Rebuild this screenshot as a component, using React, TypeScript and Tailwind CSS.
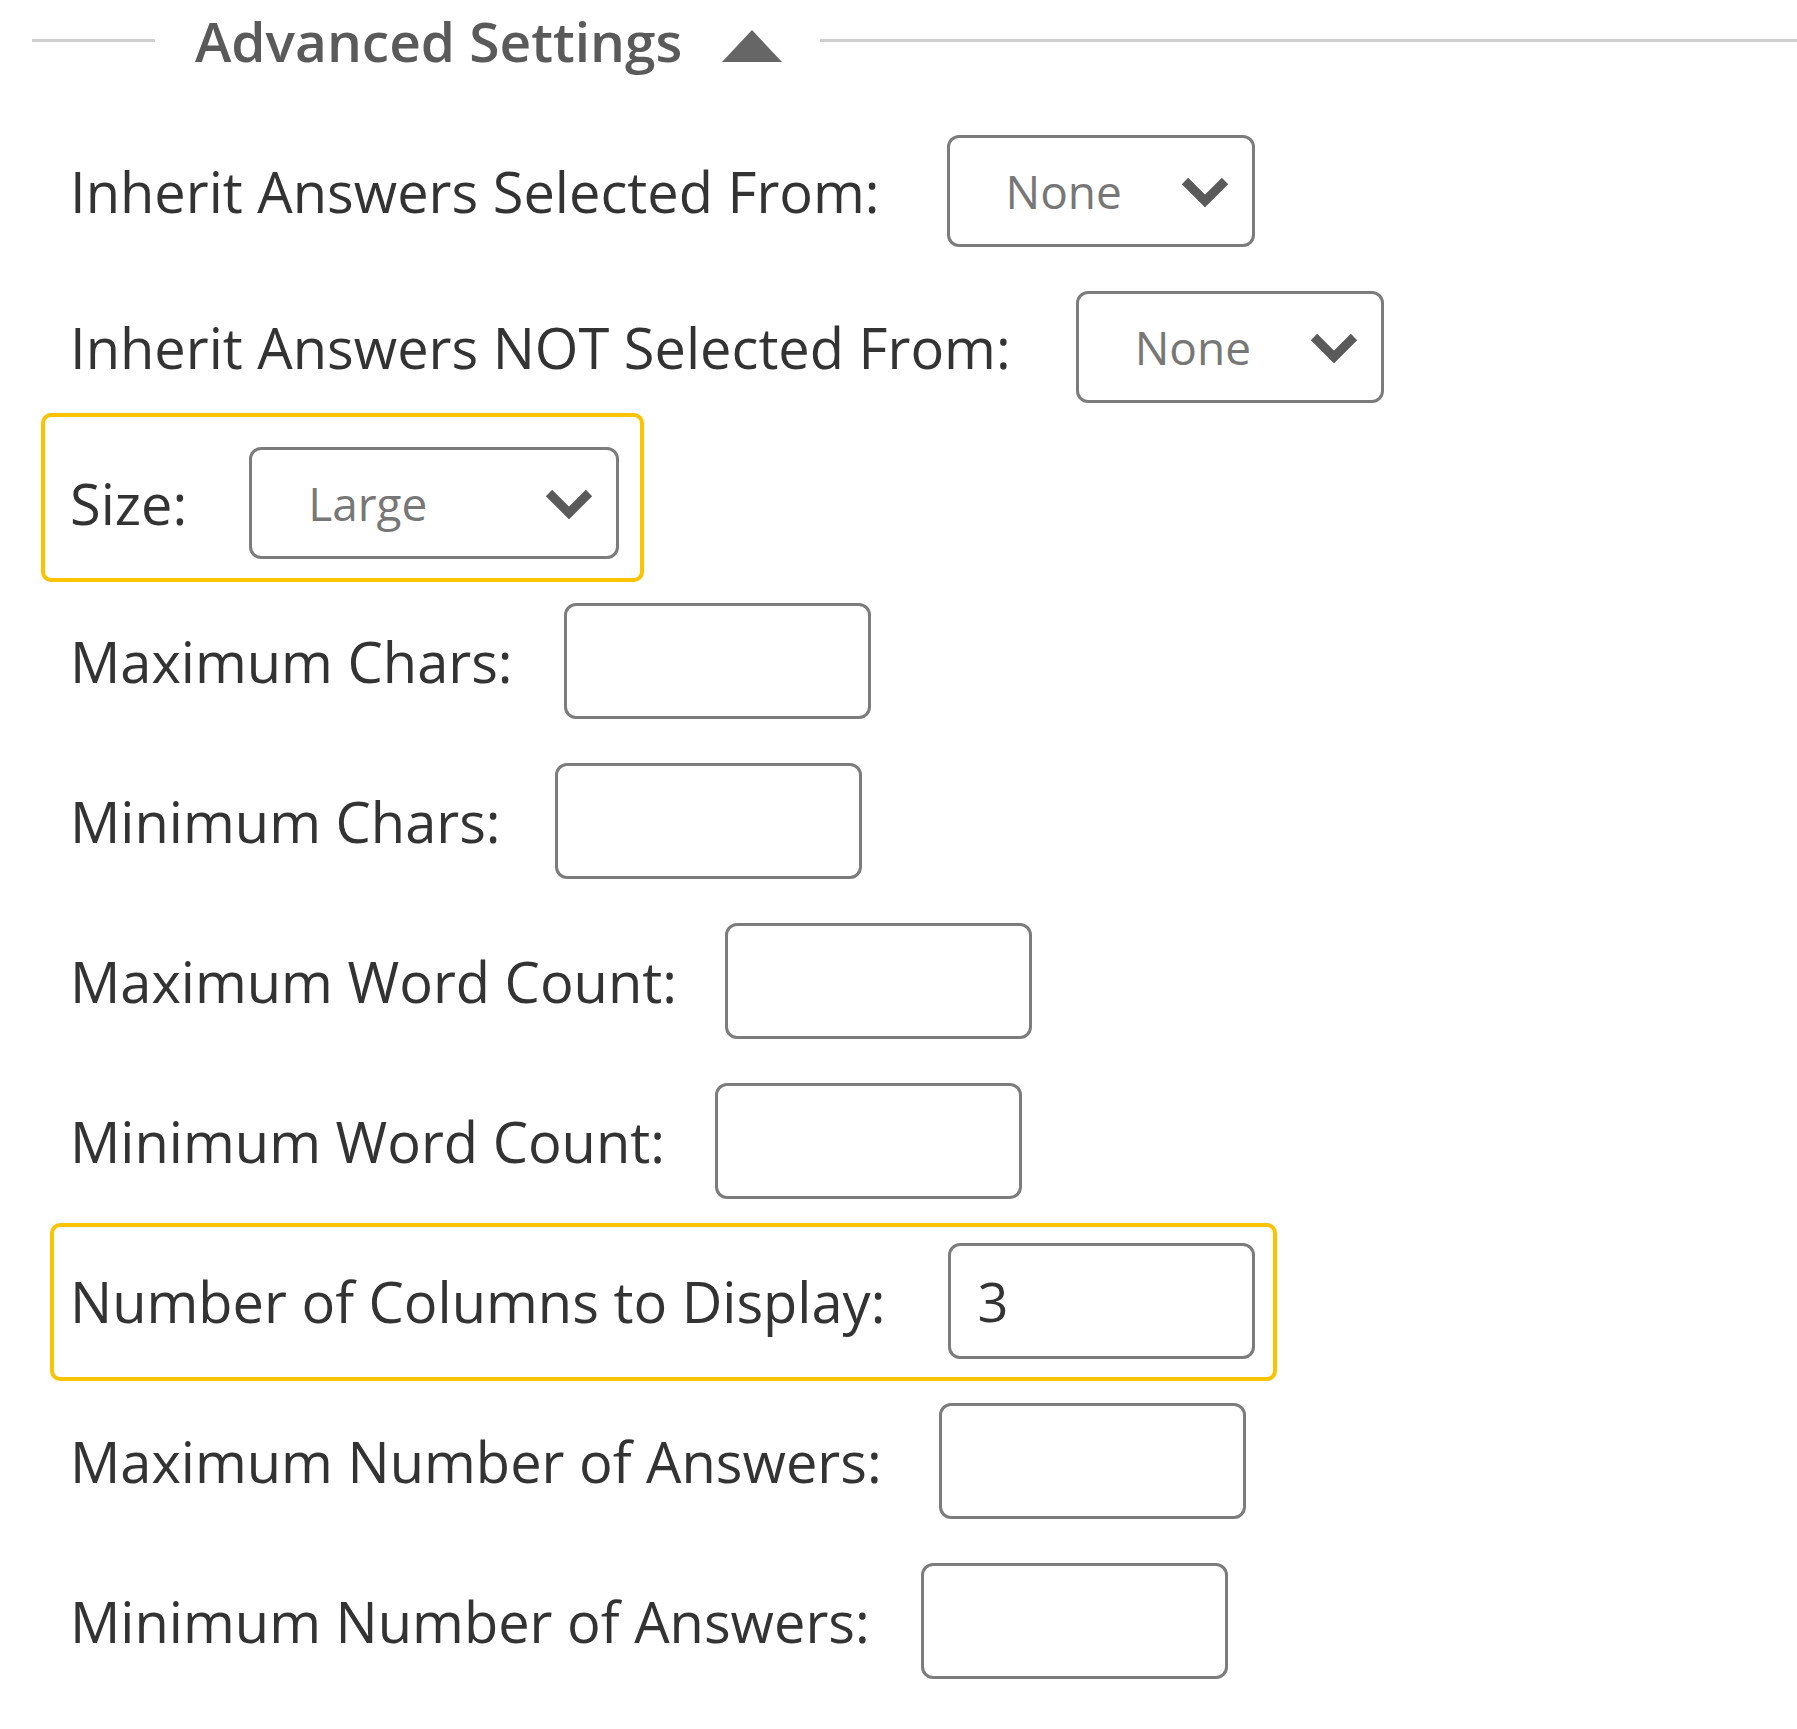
import React from "react";

const Chevron = () => (
  <svg width="50" height="32" viewBox="0 0 50 32" className="shrink-0">
    <polyline
      points="5,6 25,26 45,6"
      fill="none"
      stroke="#5a5a5a"
      strokeWidth="9"
      strokeLinejoin="miter"
    />
  </svg>
);

const SelectBox = ({ value, width }: { value: string; width: string }) => (
  <div
    className={`flex h-[112px] ${width} items-center justify-between rounded-[12px] border-[3px] border-[#7c7c7c] bg-white pl-[56px] pr-[22px]`}
  >
    <span className="text-[46px] leading-none text-[#777]">{value}</span>
    <Chevron />
  </div>
);

const TextBox = ({ value }: { value?: string }) => (
  <div className="flex h-[116px] w-[307px] items-center rounded-[12px] border-[3px] border-[#7c7c7c] bg-white pl-[26px]">
    <span className="text-[54px] leading-none text-[#333]">{value}</span>
  </div>
);

const Label = ({ children, gap }: { children: React.ReactNode; gap: string }) => (
  <span className={`${gap} whitespace-nowrap text-[56px] leading-none text-[#333]`}>
    {children}
  </span>
);

const App = () => {
  return (
    <div className="min-h-[1729px] w-[1797px] bg-white font-['Open_Sans',sans-serif]">
      {/* header */}
      <div className="flex h-[80px] items-center">
        <div className="ml-[32px] h-[3px] w-[123px] bg-[#cfcfcf]" />
        <span className="ml-[40px] text-[55px] font-semibold leading-none text-[#5a5a5a]">
          Advanced Settings
        </span>
        <svg width="60" height="32" viewBox="0 0 60 32" className="ml-[40px] mt-[12px]">
          <polygon points="30,0 60,32 0,32" fill="#666" />
        </svg>
        <div className="ml-[38px] h-[3px] flex-1 bg-[#cfcfcf]" />
      </div>

      <div className="flex flex-col gap-[44px] pl-[70px] pt-[55px]">
        <div className="flex items-center">
          <Label gap="mr-[67px]">Inherit Answers Selected From:</Label>
          <SelectBox value="None" width="w-[308px]" />
        </div>
        <div className="flex items-center">
          <Label gap="mr-[65px]">Inherit Answers NOT Selected From:</Label>
          <SelectBox value="None" width="w-[308px]" />
        </div>
        <div className="relative flex items-center">
          <span className="pointer-events-none absolute left-[-29px] top-[-34px] h-[169px] w-[603px] rounded-[10px] border-4 border-[#fcc400]" />
          <Label gap="mr-[62px]">Size:</Label>
          <SelectBox value="Large" width="w-[370px]" />
        </div>
        <div className="flex items-center">
          <Label gap="mr-[51px]">Maximum Chars:</Label>
          <TextBox />
        </div>
        <div className="flex items-center">
          <Label gap="mr-[54px]">Minimum Chars:</Label>
          <TextBox />
        </div>
        <div className="flex items-center">
          <Label gap="mr-[48px]">Maximum Word Count:</Label>
          <TextBox />
        </div>
        <div className="flex items-center">
          <Label gap="mr-[50px]">Minimum Word Count:</Label>
          <TextBox />
        </div>
        <div className="relative flex items-center">
          <span className="pointer-events-none absolute left-[-20px] top-[-20px] h-[158px] w-[1227px] rounded-[10px] border-4 border-[#fcc400]" />
          <Label gap="mr-[63px]">Number of Columns to Display:</Label>
          <TextBox value="3" />
        </div>
        <div className="flex items-center">
          <Label gap="mr-[57px]">Maximum Number of Answers:</Label>
          <TextBox />
        </div>
        <div className="flex items-center">
          <Label gap="mr-[51px]">Minimum Number of Answers:</Label>
          <TextBox />
        </div>
      </div>
    </div>
  );
};

export default App;
